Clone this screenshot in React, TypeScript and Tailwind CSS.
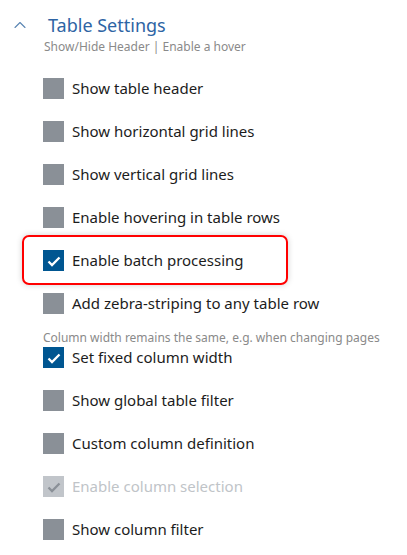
import { ChevronUp } from 'lucide-react';

type Opt = { label: string; checked?: boolean; disabled?: boolean; note?: string; highlight?: boolean };

const OPTIONS: Opt[] = [
  { label: 'Show table header' },
  { label: 'Show horizontal grid lines' },
  { label: 'Show vertical grid lines' },
  { label: 'Enable hovering in table rows' },
  { label: 'Enable batch processing', checked: true, highlight: true },
  { label: 'Add zebra-striping to any table row' },
  { label: 'Set fixed column width', checked: true, note: 'Column width remains the same, e.g. when changing pages' },
  { label: 'Show global table filter' },
  { label: 'Custom column definition' },
  { label: 'Enable column selection', checked: true, disabled: true },
  { label: 'Show column filter' },
];

function Box({ checked, disabled }: { checked?: boolean; disabled?: boolean }) {
  const bg = disabled ? 'bg-[#c1c5ca]' : checked ? 'bg-[#005691]' : 'bg-[#8a9097]';
  return (
    <span className={`w-[21px] h-[21px] shrink-0 flex items-center justify-center ${bg}`}>
      {checked && (
        <svg width="16" height="16" viewBox="0 0 16 16" fill="none">
          <path d="M2.5 8.5 L6 12 L13.5 4.5" stroke={disabled ? '#8a9097' : '#fff'} strokeWidth="2.3" />
        </svg>
      )}
    </span>
  );
}

function Row({ o }: { o: Opt }) {
  return (
    <div className="relative flex items-center gap-[8px] h-[21px]">
      {o.highlight && (
        <div className="absolute left-[-21px] w-[266px] top-[-15px] bottom-[-14px] border-2 border-[#ff0000] rounded-[7px] shadow-[0_0_6px_rgba(0,0,0,0.18)] pointer-events-none" />
      )}
      <Box checked={o.checked} disabled={o.disabled} />
      <span className={`text-[15px] leading-[21px] ${o.disabled ? 'text-[#c0c4c8]' : 'text-[#1c1c1c]'}`}>{o.label}</span>
    </div>
  );
}

export default function App() {
  return (
    <div className="w-[407px] h-[555px] bg-white overflow-hidden" style={{ fontFamily: '"Noto Sans", Arial, sans-serif' }}>
      {/* Header */}
      <div className="flex items-center pt-[13px] pl-[10px]">
        <ChevronUp size={20} strokeWidth={1.3} className="text-[#5a85b3]" />
        <h2 className="ml-[18px] text-[18px] leading-[24px] text-[#2e64a4]">Table Settings</h2>
      </div>
      <p className="pl-[44px] mt-[2px] text-[12px] leading-[16px] text-[#8a8a8a]">Show/Hide Header | Enable a hover</p>

      {/* Options */}
      <div className="pl-[43px] mt-[23px] flex flex-col gap-[22px] w-[350px]">
        {OPTIONS.map(o =>
          o.note ? (
            <div key={o.label} className="-mt-[5px] flex flex-col">
              <p className="text-[12px] leading-[14px] text-[#8a8a8a] whitespace-nowrap">{o.note}</p>
              <div className="mt-[2px]"><Row o={o} /></div>
            </div>
          ) : (
            <Row key={o.label} o={o} />
          )
        )}
      </div>
    </div>
  );
}
